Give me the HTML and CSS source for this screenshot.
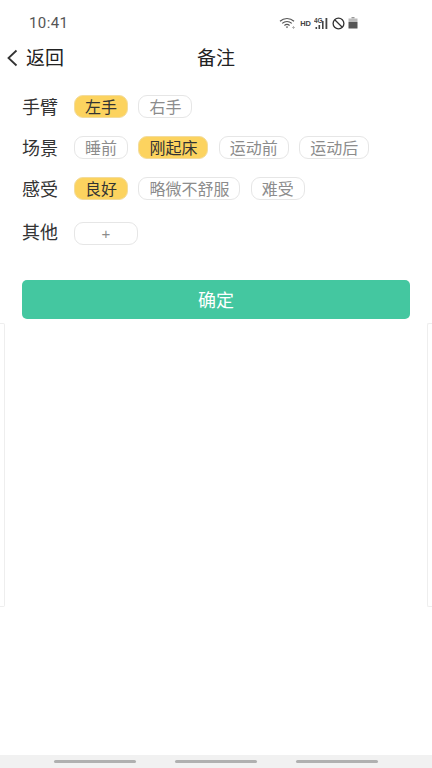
FILE: index.html
```html
<!DOCTYPE html>
<html lang="zh-CN">
<head>
    <meta charset="UTF-8">
    <meta name="viewport" content="width=device-width, initial-scale=1.0">
    <title>备注</title>
    <link rel="stylesheet" href="styles.css">
</head>
<body>
    <div class="page">
        <div class="status-bar">
            <span class="time">10:41</span>
            <div class="status-icons">
                <!-- wifi -->
                <svg class="icon-wifi" width="17" height="12" viewBox="0 0 17 12">
                    <path d="M1 4.2C5 .6 11 .6 15 4.2" fill="none" stroke="#555" stroke-width="1.2"/>
                    <path d="M3.2 6.4C6 4 10 4 12.8 6.4" fill="none" stroke="#555" stroke-width="1.2"/>
                    <path d="M5.4 8.5C7 7.2 9 7.2 10.6 8.5" fill="none" stroke="#555" stroke-width="1.2"/>
                    <path d="M8 11.2L6.8 9.8C7.5 9.3 8.5 9.3 9.2 9.8Z" fill="#555"/>
                    <path d="M13 10.5h3M14.5 9v3" stroke="#aaa" stroke-width="0.8"/>
                </svg>
                <span class="hd">HD</span>
                <!-- 4G signal -->
                <svg class="icon-signal" width="15" height="13" viewBox="0 0 15 13">
                    <text x="0" y="5.5" class="signal-text">4G</text>
                    <rect x="1.5" y="10" width="1.6" height="2" fill="#444"/>
                    <rect x="4.5" y="8" width="1.6" height="4" fill="#444"/>
                    <rect x="8" y="4" width="1.6" height="8" fill="#444"/>
                    <rect x="11.5" y="1" width="1.8" height="11" fill="#444"/>
                </svg>
                <!-- do not disturb -->
                <svg class="icon-dnd" width="13" height="13" viewBox="0 0 13 13">
                    <circle cx="6.5" cy="6.5" r="5.4" fill="none" stroke="#333" stroke-width="1.3"/>
                    <path d="M3 3l7 7" stroke="#333" stroke-width="1.3"/>
                </svg>
                <!-- battery -->
                <svg class="icon-battery" width="10" height="12" viewBox="0 0 10 12">
                    <rect x="3.5" y="0" width="3" height="1.5" fill="#999"/>
                    <rect x="0.5" y="1.5" width="9" height="3.5" fill="#bbb"/>
                    <rect x="0.5" y="5" width="9" height="6.5" fill="#555"/>
                </svg>
            </div>
        </div>

        <div class="nav-bar">
            <div class="back">
                <svg width="12" height="18" viewBox="0 0 12 18">
                    <path d="M10.5 1.5L2.5 9l8 7.5" fill="none" stroke="#333" stroke-width="1.8"/>
                </svg>
                <span>返回</span>
            </div>
            <div class="nav-title">备注</div>
        </div>

        <div class="form">
            <div class="form-row">
                <div class="row-label">手臂</div>
                <div class="chip active">左手</div>
                <div class="chip">右手</div>
            </div>
            <div class="form-row">
                <div class="row-label">场景</div>
                <div class="chip">睡前</div>
                <div class="chip active">刚起床</div>
                <div class="chip">运动前</div>
                <div class="chip">运动后</div>
            </div>
            <div class="form-row">
                <div class="row-label">感受</div>
                <div class="chip active">良好</div>
                <div class="chip">略微不舒服</div>
                <div class="chip">难受</div>
            </div>
            <div class="form-row other-row">
                <div class="row-label">其他</div>
                <div class="chip add">+</div>
            </div>
        </div>

        <div class="confirm-btn">确定</div>

        <!-- edges of the cards peeking in from either side -->
        <div class="side-edges">
            <div class="edge edge-left"></div>
            <div class="edge edge-right"></div>
        </div>

        <div class="bottom-bar">
            <div class="pill"></div>
            <div class="pill"></div>
            <div class="pill"></div>
        </div>
    </div>
</body>
</html>
```

FILE: styles.css
```css
* {
    box-sizing: border-box;
}

body {
    margin: 0;
    background-color: #fff;
    font-family: "Noto Sans CJK SC", "Noto Sans", sans-serif;
}

.page {
    display: flex;
    flex-direction: column;
    width: 432px;
    height: 768px;
    overflow: hidden;
}

.status-bar {
    display: flex;
    align-items: center;
    justify-content: space-between;
    height: 46px;
    padding: 0 74px 0 29px;
}

.time {
    font-family: Roboto, sans-serif;
    font-size: 15px;
    color: #555;
    letter-spacing: 0.4px;
}

.status-icons {
    display: flex;
    align-items: center;
    gap: 3px;
}

.hd {
    font-family: "Liberation Sans", sans-serif;
    font-size: 7.5px;
    font-weight: bold;
    color: #444;
    margin-left: 1px;
}

.signal-text {
    font-family: "Liberation Sans", sans-serif;
    font-size: 6.5px;
    font-weight: bold;
    fill: #444;
}

.nav-bar {
    position: relative;
    display: flex;
    align-items: center;
    justify-content: center;
    height: 24px;
}

.back {
    position: absolute;
    left: 6px;
    top: 0;
    display: flex;
    align-items: center;
    gap: 8px;
    height: 24px;
    font-size: 19px;
    line-height: 24px;
    color: #222;
}

.back span {
    position: relative;
    top: -1px;
}

.nav-title {
    position: relative;
    top: -1px;
    font-size: 19px;
    line-height: 24px;
    color: #222;
}

.form {
    display: flex;
    flex-direction: column;
    gap: 18px;
    margin-top: 25px;
    padding-left: 22px;
}

.form-row {
    display: flex;
    align-items: center;
    gap: 10.4px;
    height: 23px;
}

.other-row {
    margin-top: 4px;
}

.row-label {
    width: 36px;
    margin-right: 5.6px;
    font-size: 18px;
    line-height: 23px;
    color: #333;
    white-space: nowrap;
}

.other-row .row-label {
    position: relative;
    top: -2px;
}

.chip {
    height: 23px;
    padding: 0 10px;
    border: 1px solid #e6e6e6;
    border-radius: 9px;
    font-size: 16px;
    line-height: 21px;
    color: #8c8c8c;
    white-space: nowrap;
}

.chip.active {
    background-color: #fcd35f;
    border-color: #f3dc9c;
    color: #333;
}

.chip.add {
    width: 64px;
    text-align: center;
    font-family: "Liberation Sans", sans-serif;
    font-size: 15px;
}

.confirm-btn {
    height: 39px;
    margin: 35px 22px 0;
    background-color: #44c7a0;
    border-radius: 5px;
    font-size: 18px;
    line-height: 39px;
    text-align: center;
    color: #fff;
}

.side-edges {
    display: flex;
    justify-content: space-between;
    height: 284px;
    margin-top: 4px;
}

.edge {
    width: 5px;
    border: 1px solid #eee;
}

.edge-left {
    border-left: none;
    border-radius: 0 2px 2px 0;
}

.edge-right {
    border-right: none;
    border-radius: 2px 0 0 2px;
}

.bottom-bar {
    display: flex;
    justify-content: center;
    align-items: center;
    gap: 39px;
    height: 13px;
    margin-top: auto;
    background-color: #f1f1f1;
}

.pill {
    width: 82px;
    height: 3px;
    border-radius: 2px;
    background-color: #b0b0b0;
}
```
